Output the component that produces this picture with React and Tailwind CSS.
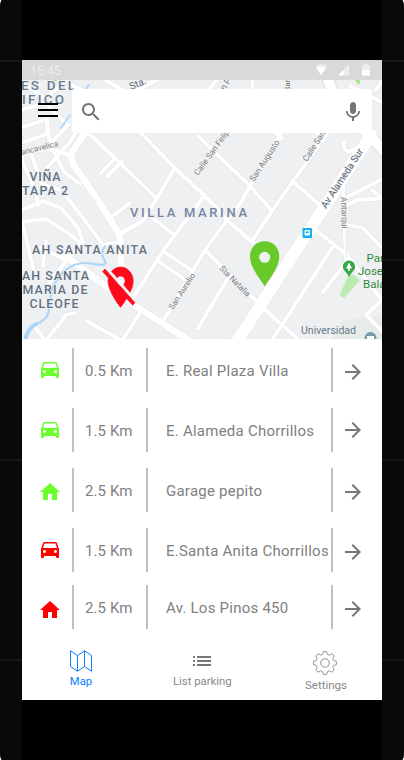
import React from "react";

const minorRoads = [
  "M85 130L115 158L157 199",
  "M140 132L175 168L213 204L227 220L253 243",
  "M175 168L157 198L143 221L120 233",
  "M198 136L250 186L272 211",
  "M283 130L250 186L240 204L227 220L205 250L163 321",
  "M205 195L163 251L133 298",
  "M330 130L293 181L272 211L252 241",
  "M292 181L320 205",
  "M150 216L173 234",
  "M163 251L193 271",
  "M158 261L184 279",
  "M205 250L260 305L282 325L300 341",
  "M228 278L198 328",
  "M332 248L282 325L271 341",
  "M313 228L347 255L384 303",
  "M343 188L346 262L323 292",
  "M347 205L357 200L384 198",
  "M348 225L363 228L384 250",
  "M384 298L366 315L384 333",
  "M384 178L345 198",
  "M372 190L384 200",
  "M344 143Q343 152 350 151L364 144",
  "M315 130L323 140M272 130L282 138",
  "M115 158L101 173M122 162L107 176",
  "M76 132L70 142L47 168",
  "M22 156Q46 143 70 156",
  "M20 128L45 120M24 142L47 134L47 118M47 120L50 145L64 172L80 184",
  "M22 110L45 103L68 125L48 146",
  "M22 160L36 192L38 205M30 150L42 184L60 190",
  "M20 211L43 201L61 208L78 228L83 242L70 256",
  "M20 222L46 219L68 233L80 243",
  "M66 196L87 223L103 245L118 242",
  "M22 222L34 271M46 241L43 266M40 248L70 262M70 256L45 288",
  "M110 218L130 203M143 221L119 235",
  "M75 313L66 315L46 341M87 321L120 340M140 313L122 341M35 327L44 339",
  "M22 82L45 98L68 80M70 84L90 94M105 80L130 94L160 78M205 95L220 75M252 75L253 94M350 86L384 103M376 90L384 78",
];

const mainRoads = [
  "M88 128L71 154L73 164L98 200L116 229Q121 236 121 246L121 284",
  "M63 254L103 284L137 307L190 341",
];

const street = (x, y, angle, text, size = 8.5, fill = "#777c80") => (
  <text x={x} y={y} transform={`rotate(${angle} ${x} ${y})`} fontSize={size} fill={fill} stroke="#f4f5f6" strokeWidth="1.5" paintOrder="stroke">
    {text}
  </text>
);

function CityMap() {
  return (
    <svg className="absolute inset-0 h-full w-full" viewBox="22 60 360 279" fontFamily="Roboto, sans-serif">
      <rect x="22" y="60" width="360" height="279" fill="#eef0f2" />
      <path d="M330 339L345 320L382 316V339Z" fill="#e7eceb" />
      <g fill="none" strokeLinejoin="round" strokeLinecap="round">
        <g stroke="#e3e5e8">
          <path d={minorRoads.join("")} strokeWidth="5" />
          <path d={mainRoads.join("")} strokeWidth="7.6" />
          <path d="M236 343L371 135M364 130L386 153M326 75L334 95" strokeWidth="13" />
        </g>
        <g stroke="#fff">
          <path d={minorRoads.join("")} strokeWidth="3.8" />
          <path d={mainRoads.join("")} strokeWidth="6.6" />
          <path d="M236 343L371 135" strokeWidth="12" />
          <path d="M364 130L386 153M326 75L334 95" strokeWidth="10" />
        </g>
        <path d="M346 190V258" stroke="#e6e8ea" strokeWidth="1" />
        <g stroke="#a9d5fb">
          <path d="M70 115L61 128M89 85L84 91" strokeWidth="1.6" />
          <path d="M105 246C99 255 104 258 106 263C102 268 92 262 84 263C69 264 63 272 56 281C47 294 52 306 47 316Q44 321 36 324" strokeWidth="2" />
          <path d="M36 324Q27 329 25 341" strokeWidth="4" />
        </g>
      </g>
      <path d="M52 79h6l-2 3zM354 79h7l-2 6z" fill="#a5e58a" />
      <path d="M350 272L360 280L345 297Q341 299 340 294Z" fill="#bdeab0" />
      {street(22, 155, -14, "ancavelica", 8)}
      {street(131, 90, -22, "Sta.", 10, "#666b70")}
      {street(225, 91, -58, "n Pa", 9)}
      {street(290, 91, -90, "San", 7.5, "#6b6558")}
      {street(198, 176, -54, "Calle San Felipe", 8.3)}
      {street(254, 182, -57, "San Augusto", 8.4)}
      {street(307, 162, -57, "Calle San Juan", 8.3)}
      {street(326, 209, -57, "Av Alameda Sur", 9.8, "#56616c")}
      {street(341, 197, 88, "Antarqui", 8.4)}
      {street(173, 310, -57, "San Aurelio", 8.2)}
      {street(219, 269, 45, "Sta Natalia", 8.2)}
      <g fontWeight="500" fill="#6c7c90" stroke="#f1f3f5" strokeWidth="1.5" paintOrder="stroke">
        <text x="21" y="90" fontSize="13.400" textLength="54">ES DEL</text>
        <text x="22" y="104" fontSize="13.400" textLength="42">IFICO</text>
        <text x="130" y="216.500" fontSize="13" textLength="117" fill="#7585a1">VILLA MARINA</text>
      </g>
      <g fontWeight="500" fill="#607080" stroke="#f1f3f5" strokeWidth="1.5" paintOrder="stroke" fontSize="12.400">
        <text x="29.500" y="181" textLength="31">VIÑA</text>
        <text x="22" y="195" textLength="46">TAPA 2</text>
        <text x="32" y="254" textLength="115">AH SANTA ANITA</text>
        <text x="22" y="279.500" textLength="67">AH SANTA</text>
        <text x="22.500" y="294" textLength="65">MARIA DE</text>
        <text x="29.500" y="308" textLength="49">CLEOFE</text>
      </g>
      <g fill="#2f8a3c" fontSize="11.500" stroke="#f1f3f5" strokeWidth="1" paintOrder="stroke">
        <text x="366.500" y="262">Par</text>
        <text x="358" y="275">Jose</text>
        <text x="363" y="287.500">Bala</text>
      </g>
      <g fill="#65798a" fontSize="11.500">
        <text x="301" y="334" textLength="55" lengthAdjust="spacingAndGlyphs">Universidad</text>
        <text x="301" y="347.500">Ricardo San</text>
      </g>
      <circle cx="370.500" cy="338" r="6" fill="#7799b0" />
      <path d="M367 339v-3h7v3z" fill="#fff" />
      <path d="M349 260.500a6.200 6.200 0 0 1 6.200 6.200c0 4-4.200 5-6.200 10.300c-2-5.300-6.200-6.300-6.200-10.300a6.200 6.200 0 0 1 6.200-6.200z" fill="#39a84a" />
      <path d="M349 262.500l3 6h-2.200v2.500h-1.600v-2.500H346z" fill="#fff" />
      <rect x="302.500" y="228" width="9.500" height="10" rx="1" fill="#12b0f5" />
      <rect x="304.500" y="230" width="5.500" height="5.500" rx="1" fill="#fff" />
      <path d="M305.500 231.500h3.500v1.500h-3.500zM304.500 236.300h1.500v1h-1.500zM308.500 236.300h1.500v1h-1.500z" fill="#12b0f5" />
      <path d="M264.700 286.300C260 279 250 267 250 256.500C250 247.500 256.500 241.300 264.700 241.300S279.300 247.500 279.300 256.500C279.300 267 269.500 279 264.700 286.300Z" fill="#68ca28" />
      <circle cx="264.700" cy="257.300" r="5.500" fill="#eef0f2" />
      <g transform="translate(99.100 263) scale(1.794 2.015)">
        <path fill="#ff0a1b" stroke="#ff0a1b" strokeWidth=".35" d="M12 6.500c1.380 0 2.500 1.120 2.500 2.500 0 .74-.33 1.390-.83 1.850l3.630 3.630c.98-1.860 1.700-3.800 1.700-5.480 0-3.870-3.130-7-7-7-1.980 0-3.760.83-5.040 2.150l3.190 3.190c.46-.52 1.110-.84 1.850-.84zm4.370 9.600l-4.630-4.630-.11-.11L3.270 3 2 4.270l3.180 3.180C5.070 7.950 5 8.470 5 9c0 5.250 7 13 7 13s1.670-1.850 3.380-4.350L18.730 21 20 19.730l-3.630-3.630z" />
      </g>
    </svg>
  );
}

function Icon({ d, className }) {
  return (
    <svg viewBox="0 0 24 24" className={"block size-6 shrink-0 fill-current " + className}>
      <path d={d} />
    </svg>
  );
}

const CAR = "M18.920 6.010C18.720 5.420 18.160 5 17.500 5h-11c-.66 0-1.210.42-1.420 1.010L3 12v8c0 .55.45 1 1 1h1c.55 0 1-.45 1-1v-1h12v1c0 .55.45 1 1 1h1c.55 0 1-.45 1-1v-8l-2.080-5.990zM6.500 16c-.83 0-1.500-.67-1.500-1.500S5.670 13 6.500 13s1.500.67 1.500 1.500S7.330 16 6.500 16zm11 0c-.83 0-1.500-.67-1.500-1.500s.67-1.500 1.500-1.500 1.500.67 1.500 1.500-.67 1.500-1.500 1.500zM5 11l1.500-4.500h11L19 11H5z";
const HOME = "M10 20v-6h4v6h5v-8h3L12 3 2 12h3v8z";
const ARROW = "M12 4l-1.410 1.410L16.170 11H4v2h12.170l-5.580 5.590L12 20l8-8z";
const SEARCH = "M15.500 14h-.79l-.28-.27C15.410 12.590 16 11.110 16 9.500 16 5.910 13.090 3 9.500 3S3 5.910 3 9.500 5.910 16 9.500 16c1.610 0 3.090-.59 4.230-1.570l.27.28v.79l5 4.990L20.490 19l-4.990-5zm-6 0C7.010 14 5 11.990 5 9.500S7.010 5 9.500 5 14 7.010 14 9.500 11.990 14 9.500 14z";
const MIC = "M12 14c1.660 0 2.990-1.340 2.990-3L15 5c0-1.660-1.340-3-3-3S9 3.340 9 5v6c0 1.660 1.340 3 3 3zm5.300-3c0 3-2.540 5.100-5.300 5.100S6.700 14 6.700 11H5c0 3.410 2.720 6.230 6 6.720V21h2v-3.280c3.280-.48 6-3.300 6-6.720h-1.700z";
const LIST = "M3 13h2v-2H3v2zm0 4h2v-2H3v2zm0-8h2V7H3v2zm4 4h14v-2H7v2zm0 4h14v-2H7v2zM7 7v2h14V7H7z";

const places = [
  { icon: CAR, tone: "text-[#6cff2e] mb-[2px]", km: "0.5 Km", name: "E. Real Plaza Villa", arrow: "mt-1" },
  { icon: CAR, tone: "text-[#6cff2e] mb-[2px]", km: "1.5 Km", name: "E. Alameda Chorrillos", arrow: "mt-0" },
  { icon: HOME, tone: "text-[#6cff2e] mt-[3px]", km: "2.5 Km", name: "Garage pepito", arrow: "mt-1" },
  { icon: CAR, tone: "text-[#ff0000] mb-[2px]", km: "1.5 Km", name: "E.Santa Anita Chorrillos", arrow: "mt-1" },
  { icon: HOME, tone: "text-[#ff0000] mt-[6px]", km: "2.5 Km", name: "Av. Los Pinos 450", arrow: "mt-1", gap: "-mt-[3px]" },
];

function PlaceRow({ place }) {
  return (
    <li className={"flex h-11 items-center text-[15px] leading-5 text-[#808080] " + (place.gap || "")}>
      <Icon d={place.icon} className={"ml-4 " + place.tone} />
      <span className="ml-[10px] h-11 w-[74px] shrink-0 border-l-2 border-[#c0c0c0] pt-[13px] pl-[11px] tracking-[0.1px] whitespace-nowrap">{place.km}</span>
      <span className="h-11 w-[185px] shrink-0 border-l-2 border-[#c0c0c0] pt-[13px] pl-[18px] tracking-[0.24px] whitespace-nowrap">{place.name}</span>
      <span className="flex h-11 flex-1 items-center border-l-2 border-[#c0c0c0] pl-2">
        <Icon d={ARROW} className={"text-[#777] " + place.arrow} />
      </span>
    </li>
  );
}

const gearPath = (() => {
  const pts = [];
  for (let i = 0; i < 8; i++) {
    const base = (i * Math.PI) / 4;
    [[-0.27, 9], [-0.15, 11.5], [0.15, 11.5], [0.27, 9]].forEach(([a, r]) => {
      pts.push(`${(12 + r * Math.sin(base + a)).toFixed(2)} ${(12 - r * Math.cos(base + a)).toFixed(2)}`);
    });
  }
  return `M${pts.join("L")}Z`;
})();

function SideRail() {
  return (
    <div className="flex w-[22px] shrink-0 flex-col gap-[198px] bg-[#090909] pt-[60px]">
      <div className="h-[2px] bg-[#161616]" />
      <div className="-mt-px h-[2px] bg-[#161616]" />
      <div className="h-[2px] bg-[#161616]" />
      <div className="h-[2px] bg-[#161616]" />
    </div>
  );
}

export default function App() {
  return (
    <div className="h-[760px] w-[404px] bg-white font-['Roboto',sans-serif]">
      <div className="flex h-full overflow-hidden rounded-[2px/9px] bg-black">
        <SideRail />
        <main className="my-[60px] flex h-[640px] w-[360px] flex-col bg-white">
          <section className="relative h-[279px] shrink-0 overflow-hidden">
            <CityMap />
            <div className="relative flex h-5 items-center bg-[#d9d9d9] pl-2 text-[12.5px] text-[#f7f7f7]">
              <span className="flex-1 pt-[2px] font-light tracking-[0.1px]">15:45</span>
              <svg className="h-5 w-[70px]" viewBox="312 60 70 20">
                <path d="M315 66Q321 61.500 327.500 66L321 75.500Z" fill="#e9e9e9" />
                <path d="M316.500 68Q321 65.500 325.800 68L321 75Z" fill="#fff" />
                <path d="M338 75.500L349 64V75.500Z" fill="#ececec" />
                <path d="M338 75.500L343.500 70V75.500Z" fill="#fff" />
                <path d="M362 65h2v-1.500h4V65h2v10.500h-8z" fill="#ececec" />
                <path d="M362 70h8v5.500h-8z" fill="#fff" />
              </svg>
            </div>
            <div className="relative flex pt-[9px]">
              <div className="mt-[14px] ml-4 flex w-5 flex-col gap-1">
                <i className="h-[2px] bg-black" />
                <i className="h-[2px] bg-black" />
                <i className="h-[2px] bg-black" />
              </div>
              <div className="ml-[14px] flex h-11 w-[300px] items-center justify-between rounded-[2px] bg-white pr-[7px] pl-[7px] text-[#757575]">
                <Icon d={SEARCH} className="mt-[2px]" />
                <Icon d={MIC} className="mt-[2px]" />
              </div>
            </div>
          </section>
          <ul className="flex flex-col gap-4 pt-[9px]">
            {places.map((place) => (
              <PlaceRow key={place.name} place={place} />
            ))}
          </ul>
          <nav className="mt-5 flex pl-12 text-[11.5px] leading-[14px] text-[#888]">
            <div className="flex w-[22px] flex-col items-center text-[#0b7dff]">
              <svg className="mt-[1px] h-[22px] w-[22px]" viewBox="0 0 22 22" fill="none" stroke="currentColor">
                <path d="M.5 .8L7.500 5.500L14.500 .8L21.500 5.500V21.200L14.500 16.500L7.500 21.200L.5 16.500ZM7.500 5.500V21M14.500 1V16.500" />
              </svg>
              <span className="mt-[3px] text-[11.3px]">Map</span>
            </div>
            <div className="ml-[81px] flex w-[59px] flex-col">
              <Icon d={LIST} className="ml-[17px] text-[#777]" />
              <span className="mt-[2px] text-[11.3px] whitespace-nowrap">List parking</span>
            </div>
            <div className="ml-[73px] flex w-[42px] flex-col">
              <svg className="mt-[2px] ml-2 size-6" viewBox="0 0 24 24" fill="none" stroke="#929292" strokeWidth="1" strokeLinejoin="round">
                <path d={gearPath} />
                <circle cx="12" cy="12" r="4.300" />
              </svg>
              <span className="mt-[3px]">Settings</span>
            </div>
          </nav>
        </main>
        <SideRail />
      </div>
    </div>
  );
}
